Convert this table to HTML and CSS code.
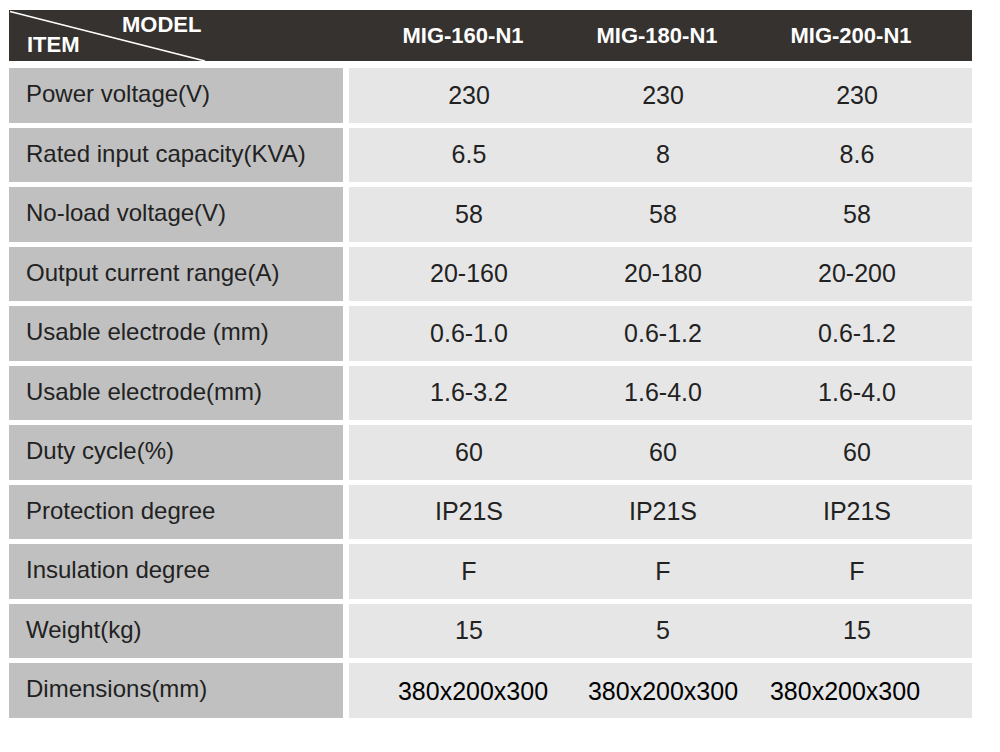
FILE: index.html
```html
<!DOCTYPE html>
<html>
<head>
<meta charset="utf-8">
<link rel="stylesheet" href="styles.css">
</head>
<body>
<div class="sheet">
  <div class="head">
    <div class="head-item">
      <svg class="diag" width="334" height="51" viewBox="0 0 334 51"><line x1="1" y1="1.5" x2="196" y2="51" stroke="#ffffff" stroke-width="1.6"/></svg>
      <span class="h-model">MODEL</span>
      <span class="h-item">ITEM</span>
    </div>
    <div class="head-models">
      <span>MIG-160-N1</span><span>MIG-180-N1</span><span>MIG-200-N1</span>
    </div>
  </div>
  <div class="body">
    <div class="row"><div class="label">Power voltage(V)</div><div class="vals"><span>230</span><span>230</span><span>230</span></div></div>
    <div class="row"><div class="label">Rated input capacity(KVA)</div><div class="vals"><span>6.5</span><span>8</span><span>8.6</span></div></div>
    <div class="row"><div class="label">No-load voltage(V)</div><div class="vals"><span>58</span><span>58</span><span>58</span></div></div>
    <div class="row"><div class="label">Output current range(A)</div><div class="vals"><span>20-160</span><span>20-180</span><span>20-200</span></div></div>
    <div class="row"><div class="label">Usable electrode (mm)</div><div class="vals"><span>0.6-1.0</span><span>0.6-1.2</span><span>0.6-1.2</span></div></div>
    <div class="row"><div class="label">Usable electrode(mm)</div><div class="vals"><span>1.6-3.2</span><span>1.6-4.0</span><span>1.6-4.0</span></div></div>
    <div class="row"><div class="label">Duty cycle(%)</div><div class="vals"><span>60</span><span>60</span><span>60</span></div></div>
    <div class="row"><div class="label">Protection degree</div><div class="vals"><span>IP21S</span><span>IP21S</span><span>IP21S</span></div></div>
    <div class="row"><div class="label">Insulation degree</div><div class="vals"><span>F</span><span>F</span><span>F</span></div></div>
    <div class="row"><div class="label">Weight(kg)</div><div class="vals"><span>15</span><span>5</span><span>15</span></div></div>
    <div class="row dims"><div class="label">Dimensions(mm)</div><div class="vals"><span>380x200x300</span><span>380x200x300</span><span>380x200x300</span></div></div>
  </div>
</div>
</body>
</html>
```

FILE: styles.css
```css
html, body {
  margin: 0;
  padding: 0;
  background: #ffffff;
}
body {
  width: 1000px;
  height: 752px;
  overflow: hidden;
  font-family: "Liberation Sans", Arial, sans-serif;
}
.sheet {
  padding: 10px 0 0 9px;
  width: 963px;
}
.head {
  display: grid;
  grid-template-columns: 334px 629px;
  height: 51px;
  background: #36322f;
  color: #ffffff;
  font-weight: bold;
  font-size: 22px;
}
.head-item {
  position: relative;
  display: flex;
  flex-direction: column;
  align-items: flex-start;
  padding-top: 5px;
  line-height: 20px;
}
.diag {
  position: absolute;
  left: 0;
  top: 0;
}
.h-model {
  margin-left: 113px;
}
.h-item {
  margin-left: 18px;
}
.head-models {
  display: grid;
  grid-template-columns: 194px 194px 194px;
  padding-left: 23px;
  align-items: center;
  text-align: center;
}
.body {
  display: flex;
  flex-direction: column;
  gap: 5px;
  margin-top: 7px;
}
.row {
  display: grid;
  grid-template-columns: 334px 623px;
  column-gap: 6px;
  height: 54.5px;
}
.label {
  background: #c0c0c0;
  color: #222222;
  font-size: 24px;
  padding-left: 17px;
  display: flex;
  align-items: center;
  padding-bottom: 2px;
}
.vals {
  background: #e6e6e6;
  display: grid;
  grid-template-columns: 194px 194px 194px;
  padding-left: 23px;
  align-items: center;
  text-align: center;
  color: #222222;
  font-size: 25px;
}
.dims .vals {
  grid-template-columns: 202px 178px 186px;
  color: #000000;
  padding-top: 2px;
}
```
